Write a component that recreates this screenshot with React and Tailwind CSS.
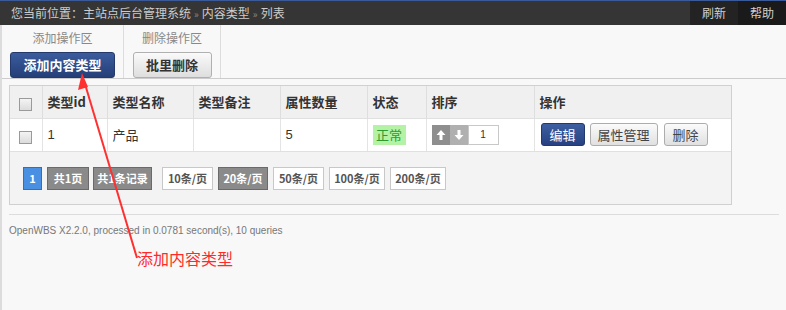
import React from "react";

const cjk = { fontFamily: '"Noto Sans CJK SC", "Liberation Sans", sans-serif' };

function Box() {
  return (
    <span className="inline-block h-[13px] w-[13px] border border-[#9a9a9a] bg-gradient-to-b from-[#f4f4f4] to-[#dcdcdc] align-middle" />
  );
}

function PageBtn({ children, dark, blue, w, extra = "" }) {
  let cls = "border-[#c8c8c8] bg-white text-[#555]";
  if (dark) cls = "border-[#6a6a6a] bg-[#8a8a8a] text-white";
  if (blue) cls = "border-[#2f6ec8] bg-[#4a90e2] text-white";
  return (
    <span className={`flex h-[23px] items-center justify-center border text-[11px] font-bold ${cls} ${w} ${extra}`}>
      {children}
    </span>
  );
}

export default function App() {
  const th = "border-r border-[#dedede] px-[5px] text-left text-[13px] font-bold text-[#333]";
  const td = "border-r border-[#e4e4e4] px-[5px] text-[13px] text-[#333]";
  return (
    <div className="relative h-[310px] w-[786px] overflow-hidden bg-[#f8f8f8]" style={cjk}>
      {/* top bar */}
      <div className="flex h-[25px] border-t border-[#3a5a9a] bg-[#353535]">
        <div className="flex flex-1 items-center pl-[11px] text-[12px] text-[#cccccc]">
          您当前位置：主站点后台管理系统 <span className="mx-[3px] text-[10px] text-[#888]">»</span> 内容类型 <span className="mx-[3px] text-[10px] text-[#888]">»</span> 列表
        </div>
        <div className="flex w-[48px] items-center justify-center bg-[#232323] text-[12px] text-[#d0d0d0]">刷新</div>
        <div className="flex w-[48px] items-center justify-center bg-[#1a1a1a] text-[12px] text-[#d0d0d0]">帮助</div>
      </div>

      <div className="h-[285px] border-l-2 border-[#dcdcdc]">
        {/* toolbar */}
        <div className="flex h-[54px] border-b border-[#cccccc]">
          <div className="flex w-[122px] flex-col items-center border-r border-[#dddddd] pt-[4px]">
            <div className="text-[12px] leading-[18px] text-[#888]">添加操作区</div>
            <button className="mt-[5px] h-[26px] w-[105px] rounded-[3px] border border-[#22396a] bg-gradient-to-b from-[#3a5c9e] to-[#253f78] text-[13px] font-bold text-white">
              添加内容类型
            </button>
          </div>
          <div className="flex w-[97px] flex-col items-center border-r border-[#dddddd] pt-[4px]">
            <div className="text-[12px] leading-[18px] text-[#888]">删除操作区</div>
            <button className="mt-[5px] h-[26px] w-[79px] rounded-[3px] border border-[#b0b0b0] bg-gradient-to-b from-[#fafafa] to-[#dedede] text-[13px] font-bold text-[#333]">
              批里删除
            </button>
          </div>
        </div>

        {/* table */}
        <div className="ml-[7px] mt-[6px] w-[723px] border border-[#d0d0d0]">
          <table className="w-full border-collapse">
            <thead>
              <tr className="h-[32px] bg-[#f0f0f0]">
                <th className="w-[32px] border-r border-[#dedede] text-center"><Box /></th>
                <th className={`${th} w-[65px]`}>类型id</th>
                <th className={`${th} w-[86px]`}>类型名称</th>
                <th className={`${th} w-[87px]`}>类型备注</th>
                <th className={`${th} w-[87px]`}>属性数量</th>
                <th className={`${th} w-[59px]`}>状态</th>
                <th className={`${th} w-[108px]`}>排序</th>
                <th className="px-[5px] text-left text-[13px] font-bold text-[#333]">操作</th>
              </tr>
            </thead>
            <tbody>
              <tr className="h-[33px] border-t border-[#e0e0e0] bg-white">
                <td className="border-r border-[#e4e4e4] text-center"><Box /></td>
                <td className={td} style={{ fontFamily: '"Liberation Sans", sans-serif' }}>1</td>
                <td className={td}>产品</td>
                <td className={td}></td>
                <td className={td} style={{ fontFamily: '"Liberation Sans", sans-serif' }}>5</td>
                <td className={td}>
                  <span className="inline-flex h-[20px] w-[33px] items-center justify-center bg-[#b4f2a6] text-[13px] text-[#2e9a2e]">正常</span>
                </td>
                <td className={td}>
                  <div className="flex h-[20px] items-center">
                    <span className="flex h-[20px] w-[18px] items-center justify-center bg-[#8e8e8e]">
                      <svg width="10" height="12" viewBox="0 0 10 12"><path d="M5 1 L9.5 6 H6.5 V11 H3.5 V6 H0.5 Z" fill="#fff" /></svg>
                    </span>
                    <span className="flex h-[20px] w-[18px] items-center justify-center bg-[#b0b0b0]">
                      <svg width="10" height="12" viewBox="0 0 10 12"><path d="M5 11 L9.5 6 H6.5 V1 H3.5 V6 H0.5 Z" fill="#fff" /></svg>
                    </span>
                    <span className="flex h-[20px] w-[31px] items-center justify-center border border-[#c8c8c8] bg-white text-[10px] text-[#333]" style={{ fontFamily: '"Liberation Sans", sans-serif' }}>1</span>
                  </div>
                </td>
                <td className="px-[5px]">
                  <div className="flex items-center gap-[5px] pl-[1px]">
                    <button className="h-[23px] w-[44px] rounded-[3px] border border-[#22396a] bg-gradient-to-b from-[#3d5fa2] to-[#274180] text-[13px] text-white">编辑</button>
                    <button className="h-[23px] w-[68px] rounded-[3px] border border-[#adadad] bg-gradient-to-b from-[#fbfbfb] to-[#e0e0e0] text-[13px] text-[#444]">属性管理</button>
                    <button className="ml-[1px] h-[23px] w-[44px] rounded-[3px] border border-[#adadad] bg-gradient-to-b from-[#fbfbfb] to-[#e0e0e0] text-[13px] text-[#444]">删除</button>
                  </div>
                </td>
              </tr>
            </tbody>
          </table>
          {/* pagination */}
          <div className="flex h-[53px] items-center gap-[5px] border-t border-[#e0e0e0] bg-[#f3f3f3] pl-[13px]">
            <PageBtn blue w="w-[19px]">1</PageBtn>
            <PageBtn dark w="w-[42px]">共1页</PageBtn>
            <PageBtn dark w="w-[59px]" extra="-ml-[1px]">共1条记录</PageBtn>
            <PageBtn w="w-[51px]" extra="ml-[5px]">10条/页</PageBtn>
            <PageBtn dark w="w-[50px]">20条/页</PageBtn>
            <PageBtn w="w-[51px]">50条/页</PageBtn>
            <PageBtn w="w-[56px]">100条/页</PageBtn>
            <PageBtn w="w-[56px]">200条/页</PageBtn>
          </div>
        </div>

        {/* footer */}
        <div className="ml-[7px] mt-[9px] w-[770px] border-t border-[#dddddd] pt-[8px] text-[10px] text-[#777]" style={{ fontFamily: '"Liberation Sans", sans-serif' }}>
          OpenWBS X2.2.0, processed in 0.0781 second(s), 10 queries
        </div>
      </div>

      {/* annotation */}
      <svg className="pointer-events-none absolute left-0 top-0" width="786" height="310">
        <line x1="137" y1="258" x2="85" y2="84" stroke="#ff3030" strokeWidth="2" />
        <path d="M82 73 L78 90 L88 87 Z" fill="#ff3030" />
      </svg>
      <div className="absolute left-[137px] top-[248px] text-[16px] leading-[20px] text-[#ff2a2a]">添加内容类型</div>
    </div>
  );
}
